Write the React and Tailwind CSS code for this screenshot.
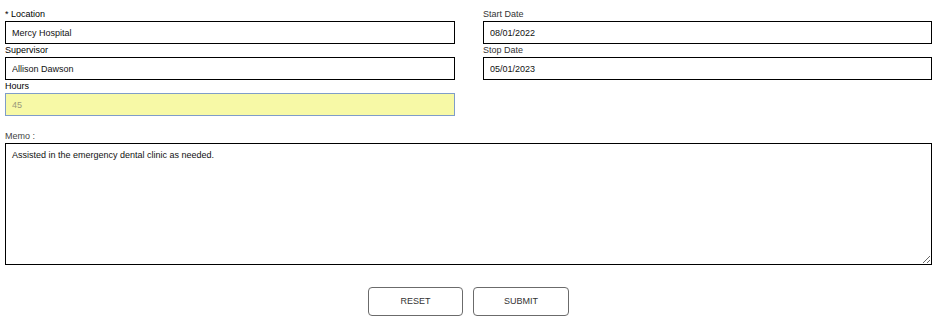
import React from "react";

const Field = ({ label, value, labelClass = "text-[#222]", inputClass = "border-black bg-white text-[#111]" }) => (
  <div className="flex flex-col">
    <label className={`h-[13px] leading-[13px] text-[9px] ${labelClass}`}>{label}</label>
    <input
      readOnly
      value={value}
      className={`h-[23px] w-full border px-[6px] text-[9px] outline-none ${inputClass}`}
    />
  </div>
);

export default function App() {
  return (
    <div
      className="w-[936px] h-[326px] bg-white pl-[5px] pr-[4px] pt-[8px]"
      style={{ fontFamily: '"Liberation Sans", Arial, sans-serif' }}
    >
      <div className="grid grid-cols-[450px_449px] gap-x-[28px]">
        <div className="flex flex-col">
          <Field label="* Location" value="Mercy Hospital" labelClass="text-black" />
          <Field label="Supervisor" value="Allison Dawson" labelClass="text-black" />
          <Field
            label="Hours"
            value="45"
            labelClass="text-black"
            inputClass="border-[#7f9dc9] bg-[#f7f9a6] text-[#9a9a7a]"
          />
        </div>
        <div className="flex flex-col">
          <Field label="Start Date" value="08/01/2022" labelClass="text-[#333]" />
          <Field label="Stop Date" value="05/01/2023" labelClass="text-[#333]" />
        </div>
      </div>
      <div className="mt-[14px] flex flex-col">
        <label className="h-[13px] leading-[13px] text-[9px] text-[#444]">Memo :</label>
        <textarea
          readOnly
          value="Assisted in the emergency dental clinic as needed."
          className="h-[122px] w-[927px] border border-black px-[6px] py-[5px] text-[9px] text-[#111] outline-none"
        />
      </div>
      <div className="mt-[22px] flex justify-center gap-[10px]">
        <button className="h-[29px] w-[95px] rounded-[4px] border border-[#6b6b6b] bg-white text-[9px] text-[#333]">
          RESET
        </button>
        <button className="h-[29px] w-[96px] rounded-[4px] border border-[#6b6b6b] bg-white text-[9px] text-[#333]">
          SUBMIT
        </button>
      </div>
    </div>
  );
}
